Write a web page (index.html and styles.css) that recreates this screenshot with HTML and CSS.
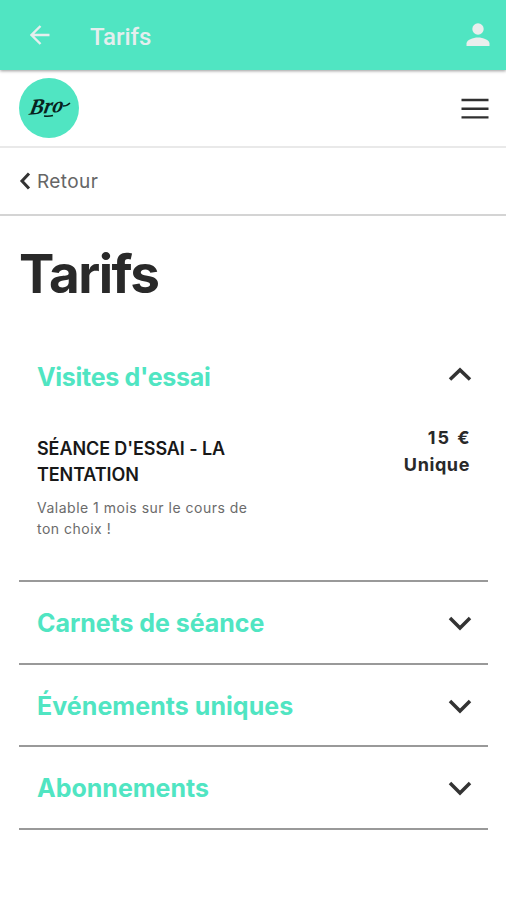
FILE: index.html
```html
<!DOCTYPE html>
<html lang="fr">
<head>
<meta charset="utf-8">
<title>Tarifs</title>
<link rel="stylesheet" href="styles.css">
</head>
<body>
<header class="appbar">
  <svg class="appbar-back" viewBox="0 0 20 20"><path d="M19.5 10H1.5M10.500 1L1.500 10l9 9"/></svg>
  <span class="appbar-title">Tarifs</span>
  <svg class="appbar-user" viewBox="0 0 24 24"><circle cx="12" cy="6" r="5.700"/><path d="M.5 23v-2.500C.5 17 7 14.500 12 14.500s11.500 2.500 11.500 6V23z"/></svg>
</header>
<div class="brandbar">
  <svg class="logo" viewBox="0 0 60 60">
    <circle class="logo-disc" cx="30" cy="30" r="30"/>
    <text class="logo-text" x="10" y="35" transform="rotate(-5 30 30) skewX(-16) translate(9 0)" textLength="34" lengthAdjust="spacingAndGlyphs">Bro</text>
    <path class="logo-stroke" d="M44 28q4 0 7-3M25 38q5 .5 9-.5"/>
  </svg>
  <svg class="menu" viewBox="0 0 28 22"><path d="M.5 2h27M.5 10.700h27M.5 19.400h27"/></svg>
</div>
<nav class="backbar">
  <svg class="back-icon" viewBox="0 0 12 18"><path d="M10 1.500L3 9l7 7.500"/></svg>
  <span class="back-label">Retour</span>
</nav>
<main class="content">
  <h1 class="title">Tarifs</h1>
  <section class="group open">
    <div class="group-head"><h2 class="name name-visits">Visites d'essai</h2><svg class="chevron chevron-up" viewBox="0 0 24 16"><path d="M2 13.500L12 4l10 9.500"/></svg></div>
    <div class="offer">
      <div class="offer-info">
        <h3 class="offer-name">SÉANCE D'ESSAI - LA<br>TENTATION</h3>
        <p class="offer-text">Valable 1 mois sur le cours de<br>ton choix !</p>
      </div>
      <div class="offer-price"><span class="amount">15 €</span><br>Unique</div>
    </div>
  </section>
  <section class="group"><h2 class="name name-packs">Carnets de séance</h2><svg class="chevron" viewBox="0 0 24 16"><path d="M2 3l10 10L22 3"/></svg></section>
  <section class="group"><h2 class="name name-events">Événements uniques</h2><svg class="chevron" viewBox="0 0 24 16"><path d="M2 3l10 10L22 3"/></svg></section>
  <section class="group"><h2 class="name name-subs">Abonnements</h2><svg class="chevron" viewBox="0 0 24 16"><path d="M2 3l10 10L22 3"/></svg></section>
</main>
</body>
</html>
```
FILE: styles.css
```css
* { box-sizing: border-box; }
body { margin: 0; height: 900px; overflow: hidden; background: #fff; font-family: Inter, "Liberation Sans", sans-serif; color: #292929; }
h1, h2, h3, p { margin: 0; }
svg { display: block; flex: none; fill: none; }
.appbar { height: 70px; background: #50e5c2; display: flex; align-items: center; padding: 2px 16px 0 30px; position: relative; box-shadow: 0 1px 3px rgba(0,0,0,.4); }
.appbar-back { width: 20px; height: 20px; stroke: #e6eeee; stroke-width: 2.4; margin-top: -2px; }
.appbar-title { margin-left: 40px; flex: 1; font: 500 24px/30px Roboto, sans-serif; color: #e4eeee; padding-top: 1px; }
.appbar-user { width: 24px; height: 24px; fill: #eaeeed; margin-top: -2px; }
.brandbar { height: 78px; border-bottom: 2px solid #e9e9e9; display: flex; align-items: center; justify-content: space-between; padding: 0 17px 0 19px; }
.logo { width: 60px; height: 60px; margin-top: -1px; }
.logo-disc { fill: #50e5c2; }
.logo-text { font: italic bold 22px "Liberation Serif", serif; fill: #08221d; }
.logo-stroke { stroke: #08221d; stroke-width: 1.5; }
.menu { width: 28px; height: 22px; stroke: #303030; stroke-width: 2.400; margin-top: 2px; }
.backbar { height: 68px; border-bottom: 2px solid #d4d4d4; display: flex; align-items: center; padding-left: 19px; }
.back-icon { width: 12px; height: 18px; stroke: #333; stroke-width: 3; }
.back-label { margin: 2px 0 0 6px; font-size: 19px; line-height: 24px; letter-spacing: .4px; color: #666; }
.content { padding: 0 18px 0 19px; }
.title { margin-top: 26px; font-size: 53px; line-height: 64px; letter-spacing: -1.500px; font-weight: 700; }
.group { height: 82.500px; border-bottom: 2px solid #999; display: flex; align-items: center; justify-content: space-between; padding: 2px 16px 0 18px; }
.open { display: block; height: 276px; padding-top: 55px; }
.group-head { display: flex; align-items: center; justify-content: space-between; height: 32px; }
.name { font-size: 25px; line-height: 32px; font-weight: 700; color: #50e5c2; white-space: nowrap; }
.name-visits { letter-spacing: -.3px; }
.name-packs { letter-spacing: -.05px; }
.name-events { letter-spacing: .05px; }
.name-subs { letter-spacing: 0; }
.chevron { width: 24px; height: 16px; stroke: #333; stroke-width: 3.500; }
.chevron-up { margin-top: -7px; }
.offer { display: flex; justify-content: space-between; margin-top: 43px; }
.offer-name { font-size: 18px; line-height: 26px; font-weight: 600; letter-spacing: -.1px; color: #181818; white-space: nowrap; }
.offer-text { margin-top: 9px; font-size: 14px; line-height: 21px; letter-spacing: .5px; color: #6b6b6b; white-space: nowrap; }
.offer-price { margin-top: -12px; padding-right: 2px; text-align: right; font-size: 18px; line-height: 27px; font-weight: 700; letter-spacing: .6px; }
.amount { letter-spacing: 2px; margin-right: -1.500px; }
```
